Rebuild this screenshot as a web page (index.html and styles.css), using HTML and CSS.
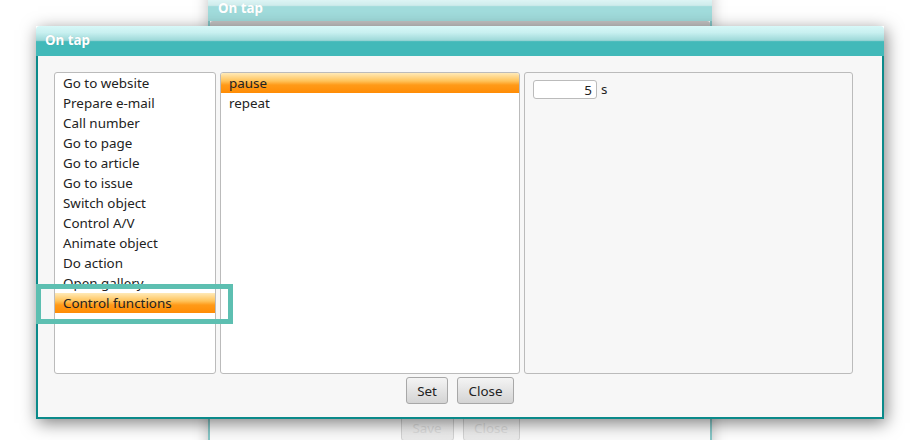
FILE: index.html
```html
<!DOCTYPE html>
<html>
<head>
<meta charset="utf-8">
<link rel="stylesheet" href="styles.css">
</head>
<body>
<div class="win back">
  <div class="title">On tap</div>
  <div class="body back-body">
    <div class="back-panel"></div>
    <div class="btns back-btns">
      <button class="btn btn-save" disabled>Save</button>
      <button class="btn btn-close" disabled>Close</button>
    </div>
  </div>
</div>
<div class="overlay"></div>
<div class="win front">
  <div class="title">On tap</div>
  <div class="body">
    <div class="cols">
      <ul class="list">
        <li>Go to website</li>
        <li>Prepare e-mail</li>
        <li>Call number</li>
        <li>Go to page</li>
        <li>Go to article</li>
        <li>Go to issue</li>
        <li>Switch object</li>
        <li>Control A/V</li>
        <li>Animate object</li>
        <li>Do action</li>
        <li>Open gallery</li>
        <li class="sel">Control functions</li>
      </ul>
      <ul class="list">
        <li class="sel">pause</li>
        <li>repeat</li>
      </ul>
      <div class="props">
        <input class="num" type="text" value="5"><span class="unit">s</span>
      </div>
    </div>
    <div class="btns front-btns">
      <button class="btn btn-set">Set</button>
      <button class="btn btn-close">Close</button>
    </div>
  </div>
</div>
<div class="mark"></div>
</body>
</html>
```
FILE: styles.css
```css
html, body {
  margin: 0;
  padding: 0;
  background: #ffffff;
  width: 911px;
  height: 440px;
  overflow: hidden;
  position: relative;
  font-family: "Noto Sans", "Open Sans", sans-serif;
  font-size: 13.4px;
  color: #222;
}
.win {
  position: absolute;
  display: flex;
  flex-direction: column;
}
.title {
  height: 30px;
  flex: none;
  box-sizing: border-box;
  padding-left: 9px;
  line-height: 29px;
  color: #fff;
  font-weight: bold;
  font-size: 13.4px;
  border-radius: 4px 4px 0 0;
  background: linear-gradient(#d8f8f8 0%, #c8f0f0 22%, #a2dbdb 45%, #8ccfcf 50%, #42b9b9 52%, #42b9b9 100%);
  text-shadow: 0 0 1px rgba(0,0,0,.15);
}
.body {
  flex: 1;
  background: #f7f7f7;
  border: 2px solid #0b8a8a;
  border-top: none;
  padding: 16px 0 0 16px;
  display: flex;
  flex-direction: column;
}
.front {
  left: 36px;
  top: 26px;
  width: 848px;
  height: 393px;
  box-shadow: 2px 4px 16px rgba(0,0,0,.5);
}
.back {
  left: 208px;
  top: -9px;
  width: 504px;
  height: 470px;
  box-shadow: 0 0 14px rgba(0,0,0,.5);
}
.back .title {
  padding: 5px 0 0 10px;
  line-height: 24px;
}
.back-body {
  padding: 0;
  align-items: center;
}
.back-panel {
  width: 500px;
  height: 392px;
  background: #8a8a8a;
  border-radius: 3px;
}
.back-btns {
  margin-top: 1px;
  gap: 9px;
  padding: 0;
}
.overlay {
  position: absolute;
  left: 0; top: 0; right: 0; bottom: 0;
  background: rgba(255,255,255,.5);
}
.cols {
  display: grid;
  grid-template-columns: 162px 300px 329px;
  gap: 4px;
  height: 302px;
}
.list {
  margin: 0;
  padding: 0;
  list-style: none;
  background: #fff;
  border: 1px solid #bbb;
  border-radius: 3px;
  overflow: hidden;
}
.list li {
  height: 20px;
  line-height: 20px;
  padding-left: 8px;
  white-space: nowrap;
}
.list li.sel {
  background: linear-gradient(#ffeab8 0%, #ffc35a 40%, #ff9a18 60%, #ff8c05 100%);
}
.props {
  border: 1px solid #bbb;
  border-radius: 3px;
  background: #f7f7f7;
  padding: 7px 0 0 8px;
  display: flex;
  align-items: flex-start;
  gap: 4px;
}
.num {
  width: 64px;
  height: 19px;
  box-sizing: border-box;
  border: 1px solid #bbb;
  border-radius: 3px;
  background: #fff;
  text-align: right;
  padding: 0 4px 0 0;
  font-family: inherit;
  font-size: 13.4px;
  color: #222;
  margin: 0;
}
.unit { line-height: 19px; }
.btns {
  display: flex;
  justify-content: center;
  gap: 9px;
}
.front-btns {
  margin-top: 3px;
  padding-right: 16px;
}
.btn {
  height: 27px;
  box-sizing: border-box;
  border: 1px solid #a8a8a8;
  border-radius: 3px;
  background: linear-gradient(#f4f4f4, #d4d4d4);
  font-family: inherit;
  font-size: 13.4px;
  color: #222;
  padding: 0;
  margin: 0;
}
.btn-set { width: 42px; }
.btn-save { width: 53px; }
.btn-close { width: 57px; }
.btn:disabled { color: #bbb; }
.mark {
  position: absolute;
  left: 36px;
  top: 284px;
  width: 197px;
  height: 40px;
  box-sizing: border-box;
  border: 5px solid #5dbfb1;
}
```
